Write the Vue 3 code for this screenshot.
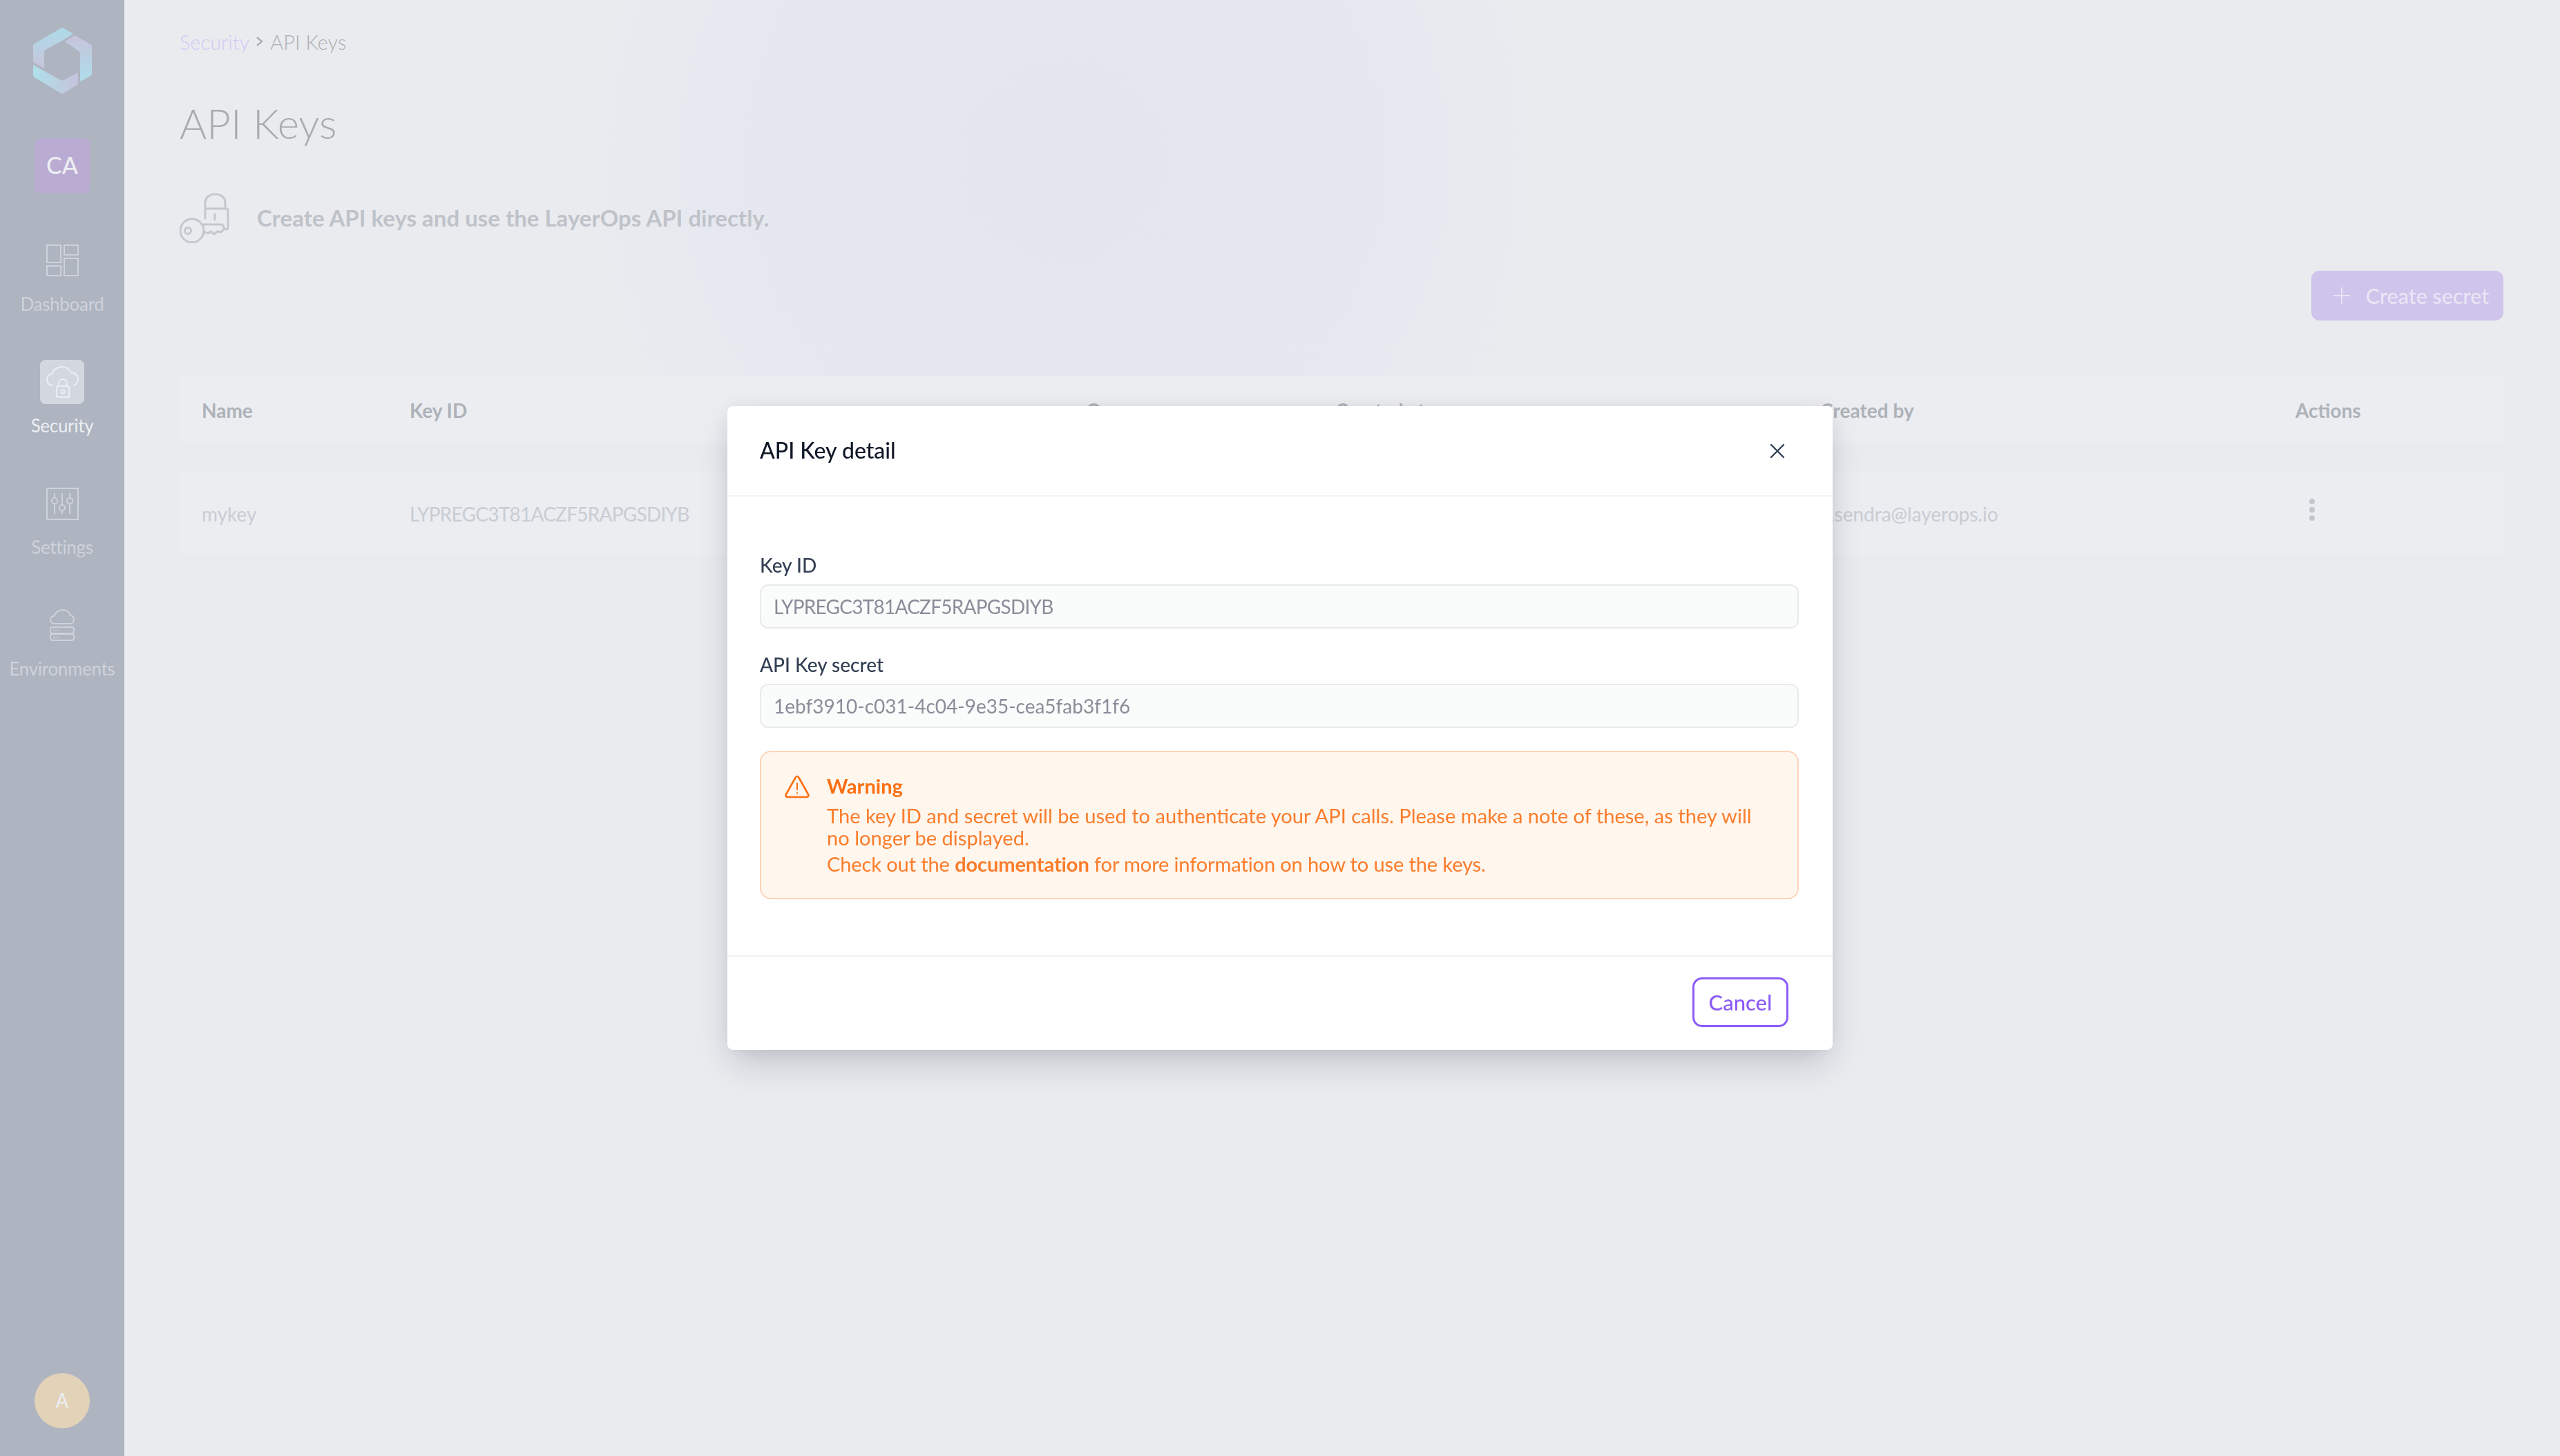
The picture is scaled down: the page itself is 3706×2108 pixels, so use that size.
<template>
  <div class="layout">
    <aside class="sidebar">
      <svg class="logo" width="92" height="104" viewBox="44 36 92 104">
        <defs>
          <linearGradient id="logoA" x1="0" y1="0" x2="0" y2="1">
            <stop offset="0" stop-color="#aedbe8" />
            <stop offset="1" stop-color="#c7c4dc" />
          </linearGradient>
          <linearGradient id="logoB" x1="0" y1="0" x2="0" y2="1">
            <stop offset="0" stop-color="#c7c4dc" />
            <stop offset="1" stop-color="#aedde9" />
          </linearGradient>
          <linearGradient id="logoC" x1="0" y1="0" x2="1" y2="0">
            <stop offset="0" stop-color="#aee0ea" />
            <stop offset="1" stop-color="#c6c3dc" />
          </linearGradient>
        </defs>
        <path d="M106 49 L92 41 Q90 40 88 41 L50 63 Q48 64 48 67 L48 90 L64 99 L64 75 Q64 73 66 72 L90 59 Z" fill="url(#logoA)" />
        <path d="M94 60 L108 51 L131 64 Q133 65 133 68 L133 107 Q133 109 131 110 L116 118 L116 78 Q116 75 114 74 Z" fill="url(#logoB)" />
        <path d="M48 94 L88 116 Q90 117 92 116 L113 105 L113 122 L92 135 Q90 136 88 135 L50 112 Q48 111 48 108 Z" fill="url(#logoC)" />
      </svg>
      <div class="org">CA</div>

      <nav class="nav">
        <a class="nav-item">
          <span class="nav-icon">
            <svg width="48" height="48" viewBox="0 0 48 48" fill="none" stroke="#ced2da" stroke-width="2">
              <rect x="2" y="2" width="20" height="25" />
              <rect x="27" y="2" width="20" height="14" />
              <rect x="2" y="32" width="20" height="14" />
              <rect x="27" y="21" width="20" height="25" />
            </svg>
          </span>
          <span class="nav-label">Dashboard</span>
        </a>
        <a class="nav-item active">
          <span class="nav-icon">
            <svg width="64" height="64" viewBox="0 0 64 64" fill="none" stroke="#eceef2" stroke-width="2" stroke-linecap="round" stroke-linejoin="round">
              <path d="M18 37 C11 36 9 31 10 27 C11 23 14 21 17 21 C19 14 25 10 32 10 C38 10 43 14 45 19 C50 18 55 22 55 28 C55 32 52 36 49 37" />
              <rect x="24" y="38" width="18" height="16" rx="2" />
              <path d="M27 38 V34 A6 6 0 0 1 39 34 V38" />
              <circle cx="33" cy="46" r="2.5" />
            </svg>
          </span>
          <span class="nav-label">Security</span>
        </a>
        <a class="nav-item">
          <span class="nav-icon">
            <svg width="48" height="48" viewBox="0 0 48 48" fill="none" stroke="#ced2da" stroke-width="2">
              <rect x="2" y="2" width="45" height="45" />
              <path d="M13 9 V15 M13 24 V39 M24 9 V25 M24 34 V39 M35 9 V15 M35 24 V39" />
              <circle cx="13" cy="20" r="4.2" />
              <circle cx="24" cy="30" r="4.2" />
              <circle cx="35" cy="20" r="4.2" />
            </svg>
          </span>
          <span class="nav-label">Settings</span>
        </a>
        <a class="nav-item">
          <span class="nav-icon">
            <svg width="48" height="48" viewBox="0 0 48 48" fill="none" stroke="#ced2da" stroke-width="2" stroke-linecap="round" stroke-linejoin="round">
              <path d="M13 22 C9 22 7 19 7 16 C7 13 9 11 12 11 C14 6 19 2 24 2 C30 2 34 5 36 10 C39 10 41 13 41 16 C41 20 38 22 35 22 Z" />
              <rect x="7" y="27" width="34" height="9" rx="3" />
              <rect x="7" y="37" width="34" height="9" rx="3" />
              <path d="M12 31.5 H13 M17 31.5 H18 M12 41.5 H13 M17 41.5 H18" />
            </svg>
          </span>
          <span class="nav-label">Environments</span>
        </a>
      </nav>

      <div class="avatar">A</div>
    </aside>

    <main class="main">
      <div class="glow"></div>

      <div class="breadcrumb">
        <a class="crumb-link">Security</a>
        <svg width="14" height="18" viewBox="0 0 14 18" fill="none" stroke="#aeb0b5" stroke-width="2.4">
          <path d="M3 3 L10 9 L3 15" />
        </svg>
        <span>API Keys</span>
      </div>

      <h1 class="title">API Keys</h1>

      <div class="intro">
        <svg width="72" height="72" viewBox="0 0 72 72" fill="none" stroke="#c3c7ce" stroke-width="3" stroke-linecap="round" stroke-linejoin="round">
          <path d="M37 36 V24 Q37 22 39 22 L68 22 Q70 22 70 24 V50 Q70 52 67 52" />
          <path d="M37 22 V13 A14.500 12 0 0 1 66 13 V22" />
          <path d="M51 30 V38" />
          <circle cx="18" cy="54" r="17" />
          <circle cx="12" cy="54" r="4.500" />
          <path d="M32 45 H62 L65 51 L60 56 L55 55 L50 59 L45 55 L41 58 L37 56 L33 60" />
        </svg>
        <p>Create API keys and use the LayerOps API directly.</p>
      </div>

      <div class="actions">
        <button class="btn-create" type="button">
          <svg width="26" height="26" viewBox="0 0 26 26" stroke="#e9e6f5" stroke-width="2"><path d="M13 1 V25 M1 13 H25" /></svg>
          Create secret
        </button>
      </div>

      <hr class="divider" />

      <div class="table">
        <div class="table-row table-head">
          <span v-for="col in columns" :key="col">{{ col }}</span>
        </div>
        <div class="table-row table-body">
          <span>mykey</span>
          <span class="key-id">LYPREGC3T81ACZF5RAPGSDIYB</span>
          <span></span>
          <span></span>
          <span>a.sendra@layerops.io</span>
          <span class="kebab"><i></i><i></i><i></i></span>
        </div>
      </div>
    </main>

    <div class="overlay">
      <div class="modal">
        <header class="modal-header">
          <h2>API Key detail</h2>
          <svg width="22" height="22" viewBox="0 0 22 22" stroke="#344054" stroke-width="2.4" stroke-linecap="round">
            <path d="M2 2 L20 20 M20 2 L2 20" />
          </svg>
        </header>

        <div class="modal-body">
          <div class="field">
            <label>Key ID</label>
            <div class="input key-id">LYPREGC3T81ACZF5RAPGSDIYB</div>
          </div>
          <div class="field">
            <label>API Key secret</label>
            <div class="input">1ebf3910-c031-4c04-9e35-cea5fab3f1f6</div>
          </div>

          <div class="alert">
            <svg class="alert-icon" width="36" height="34" viewBox="0 0 36 34" fill="none" stroke="#fb6f12" stroke-width="2.6" stroke-linejoin="round" stroke-linecap="round">
              <path d="M18 2 Q19.500 2 20.500 4 L34 28 Q35.500 32 31 32 H5 Q0.500 32 2 28 L15.500 4 Q16.500 2 18 2 Z" />
              <path d="M18 12 V21 M18 26 V26.500" stroke-width="2" />
            </svg>
            <div class="alert-text">
              <div class="alert-title">Warning</div>
              <p class="alert-msg">The key ID and secret will be used to authenticate your API calls. Please make a note of these, as they will no longer be displayed.</p>
              <p class="alert-doc">Check out the <strong>documentation</strong> for more information on how to use the keys.</p>
            </div>
          </div>
        </div>

        <footer class="modal-footer">
          <button class="btn-cancel" type="button">Cancel</button>
        </footer>
      </div>
    </div>
  </div>
</template>

<script setup>
const columns = ["Name", "Key ID", "Owner", "Created at", "Created by", "Actions"];
</script>

<style>
html,
body {
  margin: 0;
  overflow: hidden;
}
</style>

<style scoped>
.layout {
  display: flex;
  min-height: 100vh;
  font-family: "Lato", "Liberation Sans", sans-serif;
  background: #e9ebef;
}

.sidebar {
  width: 180px;
  flex-shrink: 0;
  display: flex;
  flex-direction: column;
  align-items: center;
  background: #aeb4c0;
  padding: 36px 0 40px;
  box-sizing: border-box;
}

.logo {
  display: block;
}

.org {
  width: 80px;
  height: 80px;
  margin-top: 60px;
  padding-bottom: 3px;
  box-sizing: border-box;
  border-radius: 8px;
  background: #baabd3;
  color: #eceef2;
  font-size: 34px;
  font-weight: 500;
  display: flex;
  align-items: center;
  justify-content: center;
}

.nav {
  margin-top: 65px;
  display: flex;
  flex-direction: column;
  width: 100%;
  flex: 1;
}

.nav-item {
  height: 176px;
  display: flex;
  flex-direction: column;
  align-items: center;
  color: #ced2da;
}

.nav-icon {
  width: 64px;
  height: 64px;
  border-radius: 8px;
  display: flex;
  align-items: center;
  justify-content: center;
}

.nav-label {
  margin-top: 15px;
  font-size: 26px;
  line-height: 32px;
  letter-spacing: -0.3px;
}

.nav-item.active {
  color: #eceef2;
}

.nav-item.active .nav-icon {
  background: #d3d8e0;
}

.avatar {
  width: 80px;
  height: 80px;
  border-radius: 50%;
  background: #e2d2b8;
  color: #eceef2;
  font-family: "Inter", sans-serif;
  font-size: 28px;
  display: flex;
  align-items: center;
  justify-content: center;
}

.main {
  position: relative;
  flex: 1;
  padding: 40px 82px 0 80px;
  min-width: 0;
}

.glow {
  position: absolute;
  top: 0;
  left: 676px;
  width: 1370px;
  height: 545px;
  background: radial-gradient(circle 685px at 50% 230px, #e4e5ed 0, #e5e7ef 280px, #e6e8f0 480px, #e8eaf0 600px, #e9ebef 100%);
}

.breadcrumb {
  position: relative;
  display: flex;
  align-items: center;
  gap: 8px;
  height: 40px;
  font-size: 29px;
  font-weight: 300;
  color: #aeb0b5;
}

.crumb-link {
  color: #d3caf5;
}

.title {
  position: relative;
  margin: 58px 0 0;
  height: 80px;
  font-size: 60px;
  line-height: 80px;
  font-weight: 300;
  color: #a9abaf;
}

.intro {
  position: relative;
  display: flex;
  align-items: center;
  gap: 40px;
  margin-top: 62px;
  height: 72px;
}

.intro p {
  margin: 0 0 3px;
  font-size: 33px;
  font-weight: 700;
  color: #bfc3c9;
}

.actions {
  position: relative;
  display: flex;
  justify-content: flex-end;
  margin-top: 40px;
}

.btn-create {
  width: 278px;
  height: 72px;
  border: none;
  border-radius: 12px;
  background: #cec4ec;
  color: #e9e6f5;
  font-family: inherit;
  font-size: 30.5px;
  font-weight: 500;
  display: flex;
  align-items: center;
  justify-content: center;
  gap: 22px;
  padding: 0 0 0 10px;
}

.divider {
  position: relative;
  margin: 41px 0 0;
  height: 2px;
  border: none;
  background: #e7e9ed;
}

.table {
  position: relative;
  margin-top: 38px;
  display: flex;
  flex-direction: column;
  gap: 40px;
}

.table-row {
  display: grid;
  grid-template-columns: 301px 979px 361px 702px 688px 1fr;
  align-items: center;
  padding-left: 32px;
  font-size: 28px;
  background: #ebedf1;
  border-radius: 4px;
}

.table-head {
  height: 97px;
  font-weight: 700;
  color: #aeb2b8;
}

.table-body {
  height: 123px;
  color: #c9ccd3;
}

.key-id {
  letter-spacing: -0.75px;
}

.kebab {
  display: flex;
  flex-direction: column;
  gap: 4px;
  margin: -12px 0 0 20px;
}

.kebab i {
  width: 8px;
  height: 8px;
  border-radius: 50%;
  background: #c3c6ce;
}

.overlay {
  position: fixed;
  inset: 0;
  display: flex;
  align-items: center;
  justify-content: center;
}

.modal {
  width: 1600px;
  height: 932px;
  display: flex;
  flex-direction: column;
  background: #fff;
  border-radius: 8px;
  box-shadow: 0 24px 48px -8px rgba(16, 24, 40, 0.2), 0 0 30px rgba(16, 24, 40, 0.06);
}

.modal-header {
  height: 129px;
  flex-shrink: 0;
  display: flex;
  align-items: center;
  justify-content: space-between;
  padding: 0 69px 0 47px;
  border-bottom: 2px solid #f2f3f5;
}

.modal-header h2 {
  margin: 0 0 2px;
  font-size: 32px;
  font-weight: 500;
  color: #101828;
}

.modal-body {
  flex: 1;
  padding: 80px 49px 0 47px;
}

.field {
  margin-bottom: 33px;
}

.field label {
  display: block;
  height: 38px;
  font-size: 28px;
  line-height: 38px;
  font-weight: 500;
  color: #344054;
  margin-bottom: 9px;
}

.input {
  height: 64px;
  box-sizing: border-box;
  padding: 0 18px;
  display: flex;
  align-items: center;
  background: #fafbfb;
  border: 2px solid #e9eaee;
  border-radius: 12px;
  font-size: 28px;
  color: #8a8d99;
}

.alert {
  display: flex;
  gap: 25px;
  height: 215px;
  box-sizing: border-box;
  padding: 33px 34px 0;
  background: #fff6ee;
  border: 2px solid #fed4b8;
  border-radius: 16px;
}

.alert-icon {
  flex-shrink: 0;
}

.alert-text {
  font-size: 29.1px;
  color: #fb7d2b;
}

.alert-title {
  font-weight: 700;
  color: #fb6f12;
  line-height: 36px;
  margin-bottom: 9px;
  margin-top: -2px;
}

.alert-msg {
  margin: 0 0 4px;
  line-height: 32px;
}

.alert-doc {
  margin: 0;
  line-height: 36px;
  letter-spacing: -0.15px;
}

.alert-doc strong {
  font-weight: 700;
}

.modal-footer {
  height: 137px;
  flex-shrink: 0;
  box-sizing: border-box;
  border-top: 2px solid #f2f3f5;
  display: flex;
  align-items: center;
  justify-content: flex-end;
  padding: 0 64px 3px 0;
}

.btn-cancel {
  width: 139px;
  height: 72px;
  background: #fff;
  border: 3px solid #8c5cfb;
  border-radius: 14px;
  color: #8c5bf7;
  font-family: inherit;
  font-size: 31px;
  font-weight: 500;
  padding: 0;
}
</style>
